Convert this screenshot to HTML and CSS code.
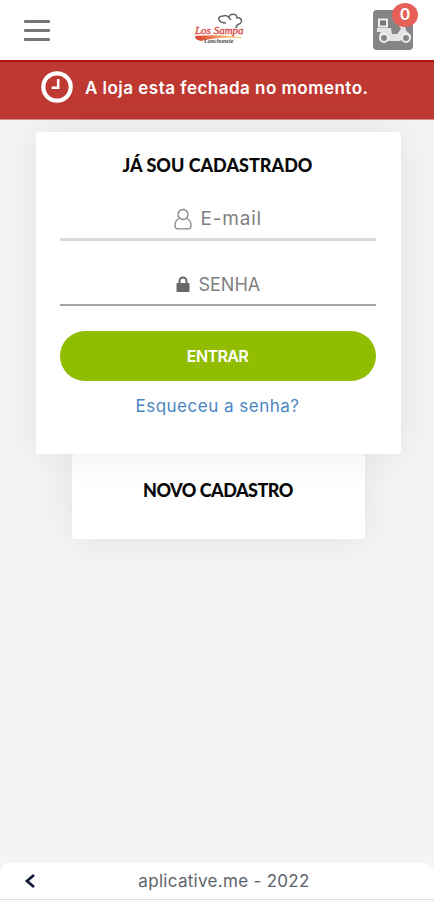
FILE: index.html
```html
<!DOCTYPE html>
<html lang="pt-BR">

<head>
    <meta charset="UTF-8">
    <meta name="viewport" content="width=device-width, initial-scale=1.0">
    <title>Login</title>

    <link rel="stylesheet" href="styles.css">
</head>

<body>
    <header class="topbar">
        <button class="menu" type="button" aria-label="Menu">
            <span></span>
            <span></span>
            <span></span>
        </button>
        <svg class="logo" width="60" height="40" viewBox="-4 0 60 40">
            <defs>
                <linearGradient id="stripe">
                    <stop offset="0" stop-color="#d9392c" />
                    <stop offset="0.5" stop-color="#f09a62" />
                    <stop offset="1" stop-color="#f6d65c" />
                </linearGradient>
            </defs>
            <!-- chef hat -->
            <path d="M33 13C25 13 23 6 30 6c3-1 5 0 6 2 0-5 8-5 8 0 5-1 6 5 2 6-2 1-3 2-3 4M36 8l2 2" fill="none" stroke="#666" stroke-width="1.500" />
            <path d="M2 26q22-2 46 1v1Q27 26 8 31q-6-1-6-5z" fill="url(#stripe)" />
            <text class="logo-name" x="2" y="24">Los Sampa</text>
            <text class="logo-sub" x="11" y="33">Lanchonete</text>
        </svg>
        <div class="cart">
            <svg width="40" height="40" viewBox="0 0 40 40">
                <rect width="40" height="40" rx="4" fill="#858585" />
                <!-- delivery scooter -->
                <path d="M6 9.500h8v7H6z" fill="#777" stroke="#eee" stroke-width="2" />
                <path d="M4 18h14l1 6h5l4-5-2-4h5l3 7c3 1 4 3 4 5l-4-1-7 5H14L6 25l2-3H4z" fill="#e4e4e4" />
                <circle cx="11" cy="28" r="4" fill="#858585" stroke="#eee" stroke-width="2" />
                <circle cx="33" cy="28" r="4" fill="#858585" stroke="#eee" stroke-width="2" />
            </svg>
            <span class="badge">0</span>
        </div>
    </header>

    <div class="alert">
        <svg width="34" height="34" viewBox="0 0 34 34" fill="none" stroke="#fff">
            <circle cx="17" cy="16" r="13.700" stroke-width="4.200" />
            <path d="M18.200 8v8.700h-6.500" stroke-width="2.600" />
        </svg>
        <span class="alert-text">A loja esta fechada no momento.</span>
    </div>

    <main>
        <form class="card login">
            <h2>JÁ SOU CADASTRADO</h2>
            <label class="field field-email">
                <svg width="18" height="22" viewBox="0 0 18 22" fill="none" stroke="#858585" stroke-width="1.300">
                    <circle cx="9" cy="6.500" r="5" />
                    <path d="M5 10.500C2 12 1 14.500 1 17.500c0 2 1 3.300 3 3.300h10c2 0 3-1.300 3-3.300 0-3-1-5.500-4-7" />
                </svg>
                <input type="email" placeholder="E-mail">
            </label>
            <label class="field field-password">
                <svg width="14" height="16" viewBox="0 0 14 16">
                    <path d="M3.500 8V5a3.500 3.500 0 0 1 7 0v3" fill="none" stroke="#686868" stroke-width="2" />
                    <rect x="0.500" y="7" width="13" height="9" rx="1" fill="#686868" />
                </svg>
                <input type="password" placeholder="SENHA">
            </label>
            <button class="submit" type="submit">ENTRAR</button>
            <a class="forgot" href="#">Esqueceu a senha?</a>
        </form>
        <section class="card register">
            <h2>NOVO CADASTRO</h2>
        </section>
    </main>

    <footer>
        <svg class="back" width="12" height="16" viewBox="0 0 12 16">
            <path d="M10 2L3 8l7 6" fill="none" stroke="#121a3a" stroke-width="2.800" />
        </svg>
        <span class="footer-text">aplicative.me - 2022</span>
    </footer>
</body>

</html>
```

FILE: styles.css
```css
* {
    box-sizing: border-box;
}

body {
    margin: 0;
    min-height: 100vh;
    display: flex;
    flex-direction: column;
    font-family: Inter, sans-serif;
    background-color: #f4f4f4;
}

.topbar {
    height: 60px;
    padding: 0 21px 0 24px;
    display: grid;
    grid-template-columns: 1fr auto 1fr;
    align-items: center;
    background-color: #fff;
}

.menu {
    width: 26px;
    padding: 0;
    display: flex;
    flex-direction: column;
    gap: 6px;
    border: none;
    background: none;
}

.menu span {
    height: 3px;
    border-radius: 1px;
    background-color: #777;
}

.logo {
    display: block;
    overflow: visible;
}

.logo-name {
    font: italic 11px "Liberation Serif", serif;
    fill: #d9453e;
    stroke: #d9453e;
    stroke-width: 0.3px;
}

.logo-sub {
    font: italic bold 6px "Liberation Serif", serif;
    fill: #444;
}

.cart {
    position: relative;
    justify-self: end;
    height: 40px;
}

.badge {
    position: absolute;
    top: -7px;
    right: -5px;
    width: 26px;
    height: 24px;
    border-radius: 50%;
    background-color: #e65f59;
    color: #fff;
    font-size: 16px;
    font-weight: 600;
    line-height: 23px;
    text-align: center;
}

.alert {
    height: 60px;
    padding: 0 0 5px 40px;
    display: flex;
    align-items: center;
    gap: 11px;
    border-top: 2px solid #ad1510;
    border-bottom: 1px solid #d98a85;
    background-color: #be3932;
    color: #fff;
    white-space: nowrap;
}

.alert-text {
    font-size: 17px;
    font-weight: 600;
    letter-spacing: 0.48px;
}

main {
    flex: 1;
    padding-top: 12px;
    display: flex;
    flex-direction: column;
    align-items: center;
}

.card {
    background-color: #fff;
    border-radius: 4px;
    box-shadow: 0 0 40px rgba(0, 0, 0, 0.08);
}

.card h2 {
    margin: 0;
    font-family: Lato, sans-serif;
    font-size: 18px;
    font-weight: 900;
    line-height: 24px;
    text-align: center;
    color: #080808;
}

.login {
    z-index: 1;
    width: 365px;
    height: 322px;
    padding: 21px 25px 0 24px;
    margin-left: 2px;
    display: flex;
    flex-direction: column;
}

.field {
    display: flex;
    justify-content: center;
    align-items: center;
    gap: 9px;
    padding-left: 2px;
}

.field-email {
    height: 44px;
    margin-top: 20px;
    padding-top: 2px;
    border-bottom: 3px solid #d9d9d9;
}

.field-password {
    height: 43px;
    margin-top: 22px;
    padding-top: 1px;
    border-bottom: 2px solid #a5a5a8;
}

.field input {
    width: 63px;
    padding: 0;
    border: none;
    outline: none;
    background: none;
    font-family: inherit;
    font-size: 18px;
}

.field-email input {
    font-size: 19px;
    letter-spacing: 0.8px;
}

.field input::placeholder {
    color: #808080;
}

.submit {
    height: 50px;
    margin-top: 25px;
    border: none;
    border-radius: 25px;
    background-color: #90bd00;
    color: #fff;
    font-family: inherit;
    font-size: 16px;
    font-weight: 600;
    letter-spacing: -0.6px;
}

.forgot {
    margin-top: 14px;
    font-size: 17px;
    line-height: 22px;
    letter-spacing: 0.5px;
    text-align: center;
    text-decoration: none;
    color: #4b86c3;
}

.register {
    width: 293px;
    height: 85px;
    padding-top: 24px;
    margin-left: 2px;
}

.register h2 {
    letter-spacing: -0.5px;
}

footer {
    height: 37px;
    padding: 0 24px;
    display: grid;
    grid-template-columns: 1fr auto 1fr;
    align-items: center;
    border-radius: 10px 10px 0 0;
    border-bottom: 1px solid #ddd;
    background-color: #fff;
}

.footer-text {
    margin-left: 14px;
    font-size: 17px;
    letter-spacing: 0.3px;
    color: #5d626b;
}
```
